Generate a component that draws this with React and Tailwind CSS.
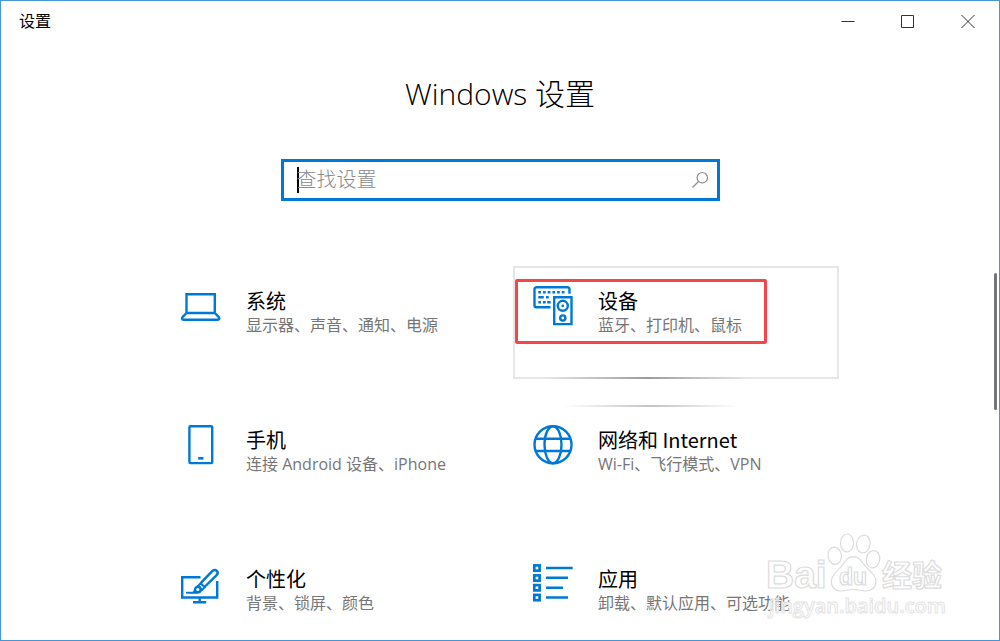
import React from "react";

const iconProps = {
  viewBox: "0 0 40 40",
  fill: "none",
  stroke: "currentColor",
  strokeWidth: 2.4,
  "aria-hidden": true,
  className: "h-10 w-10 shrink-0 overflow-visible text-[#0078d7]",
};

function LaptopIcon() {
  return (
    <svg {...iconProps}>
      <path d="M5.500 26.700V8.200h28.300v18.500" />
      <path d="M5.500 27h28.300l4 4.200c1 1.200.5 2.600-1 2.600H2.500c-1.500 0-2-1.400-1-2.600z" strokeLinejoin="round" />
    </svg>
  );
}

function DevicesIcon() {
  return (
    <svg {...iconProps}>
      <path d="M36.500 7.800V3.200a2 2 0 0 0-2-2h-31a2 2 0 0 0-2 2v16a2 2 0 0 0 2 2h14" />
      <path d="M5.300 6.300h2.700m2-0h2.700m2-0h2.700m2-0h2.700m2-0h2.700m2-0h2.700M5.300 11.300h5.500m2.200 0h2.700M5.300 16.200h2.700m2 0h2.700m1.500 0h3.500" />
      <path d="M21.200 11.200h17.300v26.900H21.200z" />
      <circle cx="29.800" cy="19.800" r="5" />
      <circle cx="29.800" cy="19.800" r="1.400" fill="currentColor" stroke="none" />
      <circle cx="29.800" cy="32" r="2.600" />
    </svg>
  );
}

function PhoneIcon() {
  return (
    <svg {...iconProps}>
      <rect x="8.400" y="1.200" width="22.800" height="36.900" rx="1" />
      <path d="M17.200 33.300h5.200" strokeWidth="2.700" />
    </svg>
  );
}

function GlobeIcon() {
  return (
    <svg {...iconProps}>
      <circle cx="20" cy="19.700" r="18.500" />
      <ellipse cx="20" cy="19.700" rx="8.500" ry="18.500" />
      <path d="M2.500 13.700h35M2.500 26h35" />
    </svg>
  );
}

function PersonalizeIcon() {
  return (
    <svg {...iconProps}>
      <path d="M19.500 13.200H1.200v20.300h35V17" />
      <path d="M18.700 33.500v4.800M12 38.300h13.200" />
      <path d="M19.700 19.200 31.200 7.200c1.500-1.500 3.400-1.600 4.600-.4s1.100 3.100-.4 4.600L23.500 23" strokeWidth="2.400" />
      <path d="M19.700 19.200l4 4-3 3-4-4z" strokeLinejoin="round" strokeWidth="2" />
      <path d="M5 28.700h12" strokeWidth="1.800" />
      <path d="M5 29.600c5 0 7.500-1.300 7.900-4.300.3-2.500 2-4 4.200-3.900 2.400.1 4 1.700 4 4 0 2.500-1.900 4.200-4.600 4.200z" fill="currentColor" stroke="none" />
      <circle cx="16.800" cy="25.600" r="1.500" fill="white" stroke="none" />
    </svg>
  );
}

function AppsIcon() {
  return (
    <svg {...iconProps}>
      {[0, 10, 19.700, 29.500].map((y) => (
        <rect key={y} x="1.300" y={y + 1.400} width="5.300" height="5.300" strokeWidth="2.700" />
      ))}
      <path d="M13 4h26.700M13 13.800h22M13 23.700h17M13 33.500h22" strokeWidth="2.500" />
    </svg>
  );
}

const categories = [
  { title: "系统", detail: "显示器、声音、通知、电源", Icon: LaptopIcon },
  { title: "设备", detail: "蓝牙、打印机、鼠标", Icon: DevicesIcon, active: true },
  { title: "手机", detail: "连接 Android 设备、iPhone", Icon: PhoneIcon },
  { title: "网络和 Internet", detail: "Wi-Fi、飞行模式、VPN", Icon: GlobeIcon, lit: true },
  { title: "个性化", detail: "背景、锁屏、颜色", Icon: PersonalizeIcon },
  { title: "应用", detail: "卸载、默认应用、可选功能", Icon: AppsIcon },
];

function Tile({ title, detail, Icon, active, lit }) {
  return (
    <a
      href="#"
      className={`relative flex h-[113px] items-start gap-[25px] border-2 px-[18px] pt-[18px] ${
        active ? "border-[#e6e6e6]" : "border-transparent"
      }`}
    >
      <Icon />
      <span className="flex flex-col pt-0.5">
        <span className="font-['Noto_Sans_CJK_SC',sans-serif] text-[20px] leading-[25px] text-black">{title}</span>
        <span className="whitespace-nowrap text-[16px] leading-[24px] text-[#767676]">{detail}</span>
      </span>
      {active && (
        <>
          <span className="absolute top-[11px] left-0 h-[65px] w-[252px] rounded-[2px] border-3 border-[#f04848]" />
          <span className="absolute -bottom-0.5 left-8 h-0.5 w-[200px] bg-linear-to-r from-transparent via-[#9c9c9c] to-transparent" />
        </>
      )}
      {lit && (
        <span className="absolute -top-0.5 left-12 h-0.5 w-[176px] bg-linear-to-r from-transparent via-[#c4c4c4] to-transparent" />
      )}
    </a>
  );
}

function Watermark() {
  return (
    <svg
      viewBox="0 0 182 90"
      className="pointer-events-none absolute right-[52px] bottom-5 h-[90px] w-[182px]"
      fill="white"
      fillOpacity="0.7"
      stroke="#dcdcdc"
      strokeWidth="1.200"
      aria-hidden="true"
    >
      <g fontWeight="700" fontFamily="'Liberation Sans', sans-serif">
        <text x="1" y="58" fontSize="39">Bai</text>
        <path d="M88.300 26.700c6 0 8.500 5 12 9.500 4 5 10.700 8.500 10.700 15.300 0 6-4.500 9.500-10 9.500-4.500 0-8-1.500-12.700-1.500s-8 1.500-12.300 1.500c-5.500 0-9.700-3.500-9.700-9.500 0-6.800 6.500-10.300 10.300-15.300 3.500-4.500 5.700-9.500 11.700-9.500z" />
        <ellipse cx="82" cy="13" rx="6.500" ry="9" />
        <ellipse cx="98.300" cy="14" rx="6.700" ry="9" transform="rotate(10 98.300 14)" />
        <ellipse cx="69.700" cy="25.700" rx="6.700" ry="8.700" transform="rotate(-8 69.700 25.700)" />
        <ellipse cx="108" cy="29.300" rx="6.700" ry="8.700" transform="rotate(8 108 29.300)" />
        <text x="74" y="55" fontSize="23">du</text>
      </g>
      <text x="117" y="56" fontSize="30" fontWeight="700" fontFamily="'Noto Sans CJK SC', sans-serif">经验</text>
      <text x="4" y="83" fontSize="20" stroke="#e4e4e4" strokeWidth="1" fontWeight="600" fontFamily="'Open Sans', sans-serif">jingyan.baidu.com</text>
    </svg>
  );
}

export default function App() {
  return (
    <div className="relative flex h-screen flex-col overflow-hidden border border-[#4596d8] bg-white font-['Open_Sans','Noto_Sans_CJK_SC',sans-serif] text-black">
      <header className="flex h-10 shrink-0 items-center justify-between pr-px pl-[18px]">
        <span className="text-[16px] leading-6">设置</span>
        <div className="flex h-full text-[#333]">
          <button type="button" aria-label="最小化" className="flex w-15 items-center justify-center">
            <svg viewBox="0 0 14 14" className="h-3.5 w-3.5" stroke="currentColor" aria-hidden="true">
              <path d="M0.500 7.500h13" />
            </svg>
          </button>
          <button type="button" aria-label="最大化" className="flex w-15 items-center justify-center">
            <svg viewBox="0 0 14 14" className="h-3.5 w-3.5" fill="none" stroke="currentColor" aria-hidden="true">
              <path d="M0.500 1.500h12v12h-12z" />
            </svg>
          </button>
          <button type="button" aria-label="关闭" className="flex w-15 items-center justify-center">
            <svg viewBox="0 0 14 14" className="h-3.5 w-3.5" stroke="currentColor" aria-hidden="true">
              <path d="M0.500 1l13 13M13.500 1l-13 13" />
            </svg>
          </button>
        </div>
      </header>

      <main className="flex flex-col items-center pt-8">
        <h1 className="text-[30px] leading-[42px] font-light">Windows 设置</h1>
        <label className="mt-11 flex h-[42px] w-[439px] items-center border-3 border-[#0078d7] pr-2 pl-[13px]">
          <span className="-mr-0.5 h-[26px] w-0.5 shrink-0 bg-black" />
          <input
            type="text"
            aria-label="查找设置"
            placeholder="查找设置"
            className="min-w-0 flex-1 bg-transparent text-[20px] leading-7 font-light outline-none placeholder:text-[#8a8a8a]"
          />
          <svg viewBox="0 0 18 18" className="h-[18px] w-[18px]" fill="none" stroke="#8c8c8c" strokeWidth="1.200" aria-hidden="true">
            <circle cx="11.300" cy="6.700" r="5.200" />
            <path d="M7.500 10.500 1.500 16.500" />
          </svg>
        </label>

        <nav className="mt-[65px] grid w-[678px] grid-cols-2 gap-[26px]">
          {categories.map((category) => (
            <Tile key={category.title} {...category} />
          ))}
        </nav>
      </main>

      <div className="absolute top-[272px] right-0.5 h-[137px] w-[3px] rounded-full bg-[#757575]" />
      <Watermark />
    </div>
  );
}
